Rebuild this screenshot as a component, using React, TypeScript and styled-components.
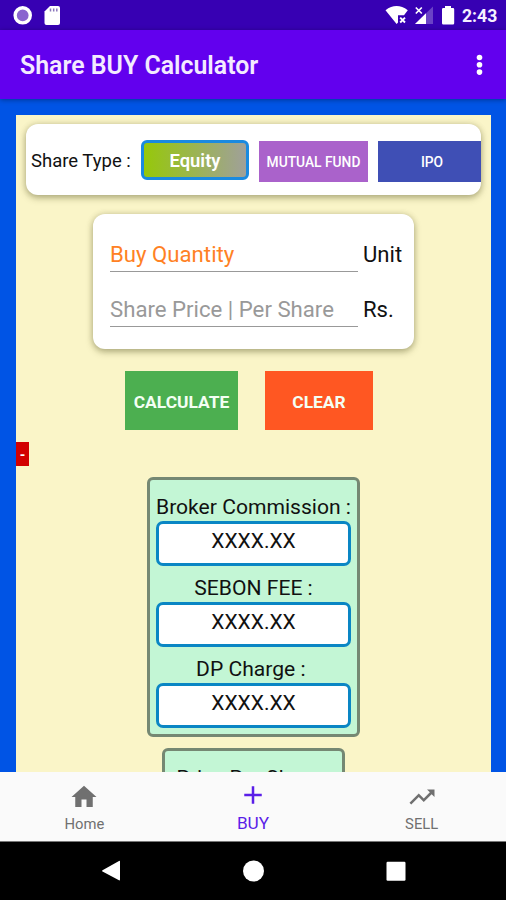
import React from "react";
import styled, { createGlobalStyle } from "styled-components";

const Global = createGlobalStyle`
  * { box-sizing: border-box; }
  body { margin: 0; font-family: Roboto, "Liberation Sans", sans-serif; color: #111; }
  button, input { font-family: inherit; border: 0; padding: 0; margin: 0; }
`;

const Screen = styled.div`
  width: 506px;
  height: 900px;
  display: flex;
  flex-direction: column;
  overflow: hidden;
  background: #0054e5;
`;

const StatusBar = styled.div`
  flex: none;
  height: 30px;
  background: #3700b3;
  display: flex;
  align-items: center;
  justify-content: space-between;
`;

const StatusGroup = styled.div`
  display: flex;
  align-items: center;
  padding-right: 9px;
`;

const Clock = styled.span`
  width: 35px;
  font-size: 17.6px;
  font-weight: 700;
  line-height: 32px;
  padding-top: 1px;
  color: #f4f0ff;
  white-space: nowrap;
`;

const AppBar = styled.header`
  flex: none;
  height: 69px;
  padding: 0 20px;
  background: #6200ee;
  display: flex;
  align-items: center;
  justify-content: space-between;
  box-shadow: 0 1px 5px rgba(0, 0, 0, 0.35);
  z-index: 1;
`;

const Title = styled.h1`
  margin: 2px 0 0;
  font-size: 24.9px;
  font-weight: 600;
  letter-spacing: 0;
  color: #f3eaff;
  white-space: nowrap;
`;

const Content = styled.main`
  flex: 1;
  min-height: 0;
  margin: 16px 15px 0 16px;
  padding-top: 9px;
  background: #faf5c8;
  display: flex;
  flex-direction: column;
  align-items: center;
  overflow: hidden;
`;

const Card = styled.section`
  flex: none;
  background: #fff;
  border-radius: 12px;
  box-shadow: 0 3px 7px rgba(70, 70, 20, 0.36), 0 0 6px rgba(70, 70, 20, 0.18);
`;

const TypeCard = styled(Card)`
  width: 455px;
  height: 71px;
  padding: 16px 0 0 5px;
  display: flex;
  overflow: hidden;
`;

const TypeLabel = styled.span`
  flex: none;
  width: 109px;
  padding-top: 1px;
  font-size: 18.5px;
  line-height: 40px;
  white-space: nowrap;
`;

const TypeButton = styled.button<{ $w: number; $bg: string; $gap?: number }>`
  flex: none;
  width: ${(p) => p.$w}px;
  height: 41px;
  margin: 1px 0 0 ${(p) => p.$gap ?? 0}px;
  padding-top: 1px;
  background: ${(p) => p.$bg};
  color: #fff;
  font-size: 13.8px;
  font-weight: 500;
  line-height: 40px;
  white-space: nowrap;
`;

const SelectedType = styled(TypeButton)`
  height: 40px;
  margin: 0 0 0 1px;
  border: 3.5px solid #1a8ae0;
  border-radius: 6px;
  padding-top: 1px;
  font-size: 18.4px;
  font-weight: 600;
  line-height: 34px;
`;

const FormCard = styled(Card)`
  width: 321px;
  height: 135px;
  margin-top: 19px;
  padding: 22px 0 0 17px;
`;

const Field = styled.label`
  display: flex;
  height: 55px;
`;

const Input = styled.input<{ $hint: string }>`
  width: 248px;
  height: 36px;
  background: transparent;
  border-bottom: 1.5px solid #999;
  border-radius: 0;
  font-size: 22.2px;
  outline: 0;
  &::placeholder {
    color: ${(p) => p.$hint};
    opacity: 1;
  }
`;

const Unit = styled.span`
  margin-left: 5px;
  font-size: 22.1px;
  line-height: 37px;
`;

const Actions = styled.div`
  flex: none;
  display: flex;
  gap: 27px;
  margin: 22px 9px 0 0;
`;

const Action = styled.button<{ $w: number; $bg: string }>`
  width: ${(p) => p.$w}px;
  height: 59px;
  padding-top: 2px;
  background: ${(p) => p.$bg};
  color: #f4fff4;
  font-size: 17.4px;
  font-weight: 700;
  white-space: nowrap;
`;

const Message = styled.div`
  flex: none;
  align-self: flex-start;
  width: 13px;
  height: 24px;
  margin-top: 12px;
  background: #d20000;
  color: #fff;
  font-size: 14px;
  font-weight: 700;
  line-height: 27px;
  text-align: center;
`;

const Panel = styled.section<{ $w: number; $h: number }>`
  flex: none;
  width: ${(p) => p.$w}px;
  height: ${(p) => p.$h}px;
  margin-top: 11px;
  padding-top: 5px;
  border: 3px solid #758873;
  border-radius: 6px;
  background: #c3f6d5;
  display: flex;
  flex-direction: column;
  align-items: center;
`;

const Row = styled.div`
  height: 81px;
  width: 195px;
  display: flex;
  flex-direction: column;
  align-items: center;
`;

const RowLabel = styled.span`
  height: 36px;
  padding-top: 4px;
  font-size: 21.1px;
  line-height: 36px;
  white-space: pre;
`;

const Value = styled.output`
  width: 195px;
  height: 45px;
  border: 3.4px solid #0a86c4;
  border-radius: 7px;
  background: #fff;
  font-size: 21px;
  line-height: 35px;
  text-align: center;
`;

const BottomNav = styled.nav`
  flex: none;
  height: 70px;
  background: #fafafa;
  border-bottom: 1px solid #777;
  display: grid;
  grid-template-columns: repeat(3, 1fr);
`;

const Tab = styled.a<{ $active?: boolean }>`
  display: flex;
  flex-direction: column;
  align-items: center;
  padding-top: ${(p) => (p.$active ? 8 : 10)}px;
  color: ${(p) => (p.$active ? "#5a1ee8" : "#707070")};
  font-size: ${(p) => (p.$active ? 17.2 : 14.8)}px;
  line-height: 20px;
`;

const TabLabel = styled.span<{ $active?: boolean }>`
  margin-top: ${(p) => (p.$active ? 3 : 2)}px;
`;

const SystemNav = styled.div`
  flex: none;
  height: 58px;
  background: #000;
`;

const rows = ["Broker Commission :", "SEBON FEE :", "DP Charge : "];

const tabs = [
  { label: "Home", icon: "M10 20v-6h4v6h5v-8h3L12 3 2 12h3v8z" },
  { label: "BUY", icon: "M19 13h-6v6h-2v-6H5v-2h6V5h2v6h6v2z", active: true },
  {
    label: "SELL",
    icon: "M16 6l2.290 2.290-4.880 4.880-4-4L2 16.590 3.410 18l6-6 4 4 6.300-6.290L22 12V6z",
  },
];

export default function App() {
  return (
    <Screen>
      <Global />
      <StatusBar>
        <svg width="70" height="30" viewBox="0 0 70 30">
          <circle cx="22.7" cy="15.3" r="7.6" fill="#8a65cf" stroke="#fff" strokeWidth="3.4" />
          <path d="M50 6h8q2 0 2 2v15q0 2-2 2H46.500q-2 0-2-2V11.500z" fill="#fff" />
          <path d="M50.500 8.500v3M53.700 8.500v3M56.800 8.500v3" stroke="#8b76bc" strokeWidth="1.500" />
        </svg>
        <StatusGroup>
          <svg width="77" height="30" viewBox="385 0 77 30" fill="#fff">
            <path d="M385.500 10.200Q396.500 1.800 407.800 10.200L404 15.200H398V22.500L396.600 24z" />
            <path d="M400.200 17.700l4.800 4.800M405 17.700l-4.800 4.800" stroke="#fff" strokeWidth="1.900" />
            <path d="M433 6.500V24H415z" fill="#6a42c6" />
            <path d="M426 13.300V24H415z" />
            <path d="M415.800 7.500l6 6M421.800 7.500l-6 6" stroke="#fff" strokeWidth="1.700" />
            <path d="M445 6h6v2h2q1.200 0 1.200 1.200v14q0 1.300-1.200 1.300h-9.700q-1.300 0-1.300-1.300v-14Q442 8 443.300 8H445z" />
          </svg>
          <Clock>2:43</Clock>
        </StatusGroup>
      </StatusBar>
      <AppBar>
        <Title>Share BUY Calculator</Title>
        <svg width="14" height="24" viewBox="0 0 14 24" fill="#fff">
          <circle cx="7.500" cy="4.500" r="2.800" />
          <circle cx="7.500" cy="11.800" r="2.800" />
          <circle cx="7.500" cy="19.100" r="2.800" />
        </svg>
      </AppBar>
      <Content>
        <TypeCard>
          <TypeLabel>Share Type :</TypeLabel>
          <SelectedType $w={108} $bg="linear-gradient(90deg, #96c80a, #a0a09a)">
            Equity
          </SelectedType>
          <TypeButton $w={109} $bg="#aa62cb" $gap={10}>MUTUAL FUND</TypeButton>
          <TypeButton $w={108} $bg="#3f4fb5" $gap={10}>IPO</TypeButton>
        </TypeCard>
        <FormCard>
          <Field>
            <Input $hint="#ff8124" placeholder="Buy Quantity" />
            <Unit>Unit</Unit>
          </Field>
          <Field>
            <Input $hint="#999" placeholder="Share Price | Per Share" />
            <Unit>Rs.</Unit>
          </Field>
        </FormCard>
        <Actions>
          <Action $w={113} $bg="#4caf50">CALCULATE</Action>
          <Action $w={108} $bg="#ff5722">CLEAR</Action>
        </Actions>
        <Message>-</Message>
        <Panel $w={213} $h={260}>
          {rows.map((r) => (
            <Row key={r}>
              <RowLabel>{r}</RowLabel>
              <Value>XXXX.XX</Value>
            </Row>
          ))}
        </Panel>
        <Panel $w={183} $h={100}>
          <RowLabel>Price Per Share :</RowLabel>
        </Panel>
      </Content>
      <BottomNav>
        {tabs.map((t) => (
          <Tab key={t.label} $active={t.active}>
            <svg width="30" height="30" viewBox="0 0 24 24" fill="currentColor">
              <path d={t.icon} />
            </svg>
            <TabLabel $active={t.active}>{t.label}</TabLabel>
          </Tab>
        ))}
      </BottomNav>
      <SystemNav>
        <svg width="506" height="58" viewBox="0 0 506 58" fill="#fff">
          <path d="M102.500 28.200 119 19q1-.5 1 .6v18q0 1.200-1 .6L102.500 29.600q-1-.7 0-1.400z" />
          <circle cx="253.500" cy="29" r="10.500" />
          <rect x="386.500" y="19.700" width="19" height="19" rx="1.200" />
        </svg>
      </SystemNav>
    </Screen>
  );
}
